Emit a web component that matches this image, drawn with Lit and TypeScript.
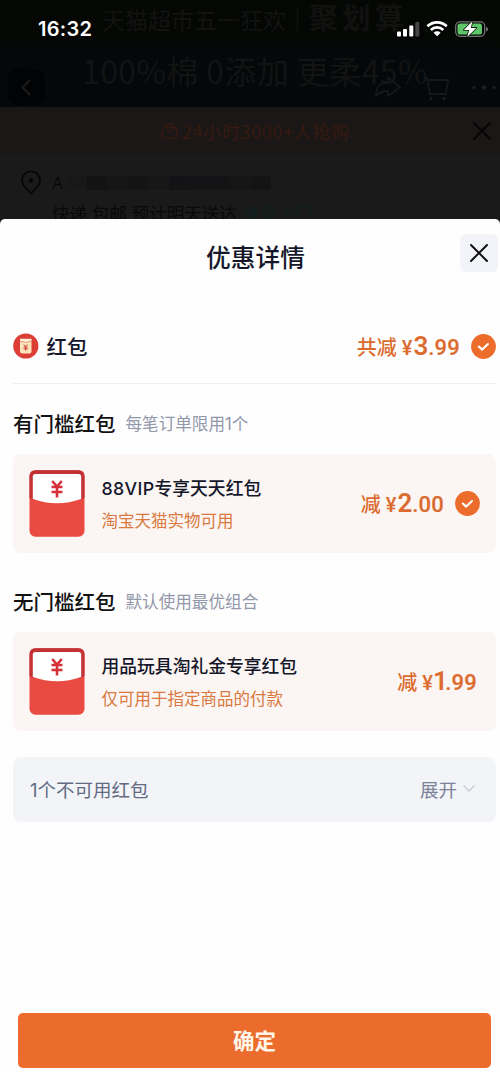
import { LitElement, html, css, svg, nothing } from "lit";
import { customElement, property } from "lit/decorators.js";

const CROSS = svg`<path d="M2 2 L18 18 M18 2 L2 18" fill="none" stroke="currentColor" stroke-width="2" stroke-linecap="round"/>`;

@customElement("status-bar")
class StatusBar extends LitElement {
  static styles = css`
    :host { display: flex; justify-content: space-between; align-items: center; height: 58px; padding: 0 11px 0 38px; box-sizing: border-box; color: #fff; }
    .time { font: 600 20px/24px Inter, sans-serif; letter-spacing: 0.3px; }
    .icons { display: block; }
  `;
  render() {
    return html`
      <span class="time">16:32</span>
      <svg class="icons" width="93" height="18" viewBox="0 0 93 18">
        <g fill="#fff">
          <rect x="1" y="11.500" width="4" height="5" rx="1"/>
          <rect x="7" y="9" width="4" height="7.500" rx="1"/>
          <rect x="13.300" y="5.500" width="4" height="11" rx="1"/>
          <rect x="19.300" y="2" width="4" height="14.500" rx="1" fill="#464646"/>
        </g>
        <g fill="none" stroke="#fff" stroke-width="2.700">
          <path d="M31.400 6.300 A14 14 0 0 1 50.800 6.300"/>
          <path d="M34.900 9.900 A9 9 0 0 1 47.300 9.900"/>
        </g>
        <path d="M37.600 12.700 A5 5 0 0 1 44.600 12.700 L41.100 16.300Z" fill="#fff"/>
        <rect x="59.700" y="1.800" width="29" height="14.600" rx="4.300" fill="none" stroke="#777" stroke-width="1.200"/>
        <rect x="61.500" y="3.600" width="24.500" height="11" rx="2.600" fill="#5fc56a"/>
        <path d="M90 6.800 Q92 7.400 92 9.200 Q92 11 90 11.600Z" fill="#777"/>
        <path d="M76.500 1 L67.800 10 L73.200 10 L71.200 17 L80.300 7.900 L74.800 7.900Z" fill="#fff" stroke="#0c1a0e" stroke-width="1.600" paint-order="stroke" stroke-linejoin="round"/>
      </svg>
    `;
  }
}

@customElement("dimmed-page")
class DimmedPage extends LitElement {
  static styles = css`
    :host { display: block; position: relative; height: 219px; overflow: hidden; background: #1b1a1a; font-family: Inter, "Noto Sans CJK SC", sans-serif; }
    .banner { height: 107px; box-sizing: border-box; background: linear-gradient(#040704 0, #040704 45px, #04080a 55px, #04080a 100%); color: #131312; white-space: nowrap; overflow: hidden; }
    .promo { display: flex; align-items: center; height: 38px; padding-left: 102px; font-size: 23px; }
    .sep { margin: 0 8px 0 8px; font-size: 20px; }
    .brand { font-size: 29px; line-height: 34px; font-weight: 700; letter-spacing: 4px; color: #111110; }
    .claim { height: 44px; line-height: 44px; margin-top: 10px; padding-left: 82px; font-family: "Noto Sans CJK SC", sans-serif; font-size: 32px; letter-spacing: 0.4px; }
    .status { position: absolute; top: 0; left: 0; right: 0; }
    .back { position: absolute; left: 8px; top: 69px; width: 37px; height: 36px; border-radius: 9px; background: #020304; }
    .tools { position: absolute; left: 370px; top: 68px; }
    .hot { display: flex; align-items: center; height: 47px; padding: 0 8px 0 161px; background: #1b1716; color: #361a11; font-size: 18px; }
    .hotText { margin-left: 4px; flex: 1; font-family: "Noto Sans CJK SC", sans-serif; letter-spacing: 0.65px; white-space: nowrap; }
    .cross { color: #050505; }
    .address { display: grid; grid-template-columns: 31px 1fr; padding: 14px 0 0 21px; color: #090909; }
    .pin { margin-top: 1px; }
    .blur { display: flex; align-items: center; height: 30px; }
    .a { font-size: 16px; width: 14px; }
    .block { height: 14px; width: 20.500px; }
    .ship { grid-column: 2; font-size: 17.500px; line-height: 26px; margin-top: 3px; white-space: nowrap; }
    .door { color: #0d201d; }
  `;
  render() {
    const tones = ["#181818", "#131314", "#161617", "#141415", "#171717", "#131315", "#141416", "#141416", "#161616", "#141414"];
    return html`
      <div class="banner">
        <div class="promo"><span>天猫超市五一狂欢</span><span class="sep">|</span><span class="brand">聚划算</span></div>
        <div class="claim">100%棉 0添加 更柔45%</div>
      </div>
      <div class="hot">
        <svg width="17" height="18" viewBox="0 0 17 18" fill="none" stroke="currentColor" stroke-width="1.500">
          <path d="M4.500 5.500 C4.500 0.500 12.500 0.500 12.500 5.500 M2.500 5.500 H14.500 L16 10 V13 Q16 16 13 16 H4 Q1 16 1 13 V10Z M5.500 8 Q8.500 11 11.500 8"/>
        </svg>
        <span class="hotText">24小时3000+人抢购</span>
        <svg class="cross" width="20" height="20" viewBox="0 0 20 20">${CROSS}</svg>
      </div>
      <div class="address">
        <svg class="pin" width="20" height="26" viewBox="0 0 20 26">
          <path d="M10 24.500 L3.800 17.800 A9 9 0 1 1 16.200 17.800Z" fill="none" stroke="#060606" stroke-width="1.800" stroke-linejoin="round"/>
          <circle cx="10" cy="11.500" r="2.300" fill="#060606"/>
        </svg>
        <div class="blur"><span class="a">A</span>${tones.map((tone) => html`<span class="block" style="background:${tone}"></span>`)}</div>
        <div class="ship">快递 包邮 预计明天送达 <span class="door">送货上门</span></div>
      </div>
      <svg class="back" viewBox="0 0 37 36"><path d="M22 11 L14.500 18.500 L22 26" fill="none" stroke="#1d1d1d" stroke-width="2"/></svg>
      <svg class="tools" width="130" height="36" viewBox="0 0 130 36" fill="none" stroke="#171717" stroke-width="1.800" stroke-linejoin="round">
        <path d="M6 28 C6 18 10 14.500 18 14.500 V9.500 L30 19 L18 28 V23 C12 23 9 24.500 6 28Z"/>
        <path d="M54 10 H57 L60 26 H76 L78 12 H58"/>
        <g fill="#1d1d1d" stroke="none">
          <circle cx="61" cy="30.500" r="1.600"/><circle cx="74" cy="30.500" r="1.600"/>
          <circle cx="104" cy="19.500" r="1.800"/><circle cx="114" cy="19.500" r="2.300"/><circle cx="124" cy="19.500" r="1.800"/>
        </g>
      </svg>
      <status-bar class="status"></status-bar>
    `;
  }
}

@customElement("price-cut")
class PriceCut extends LitElement {
  @property() label = "";
  @property() whole = "";
  @property() cents = "";
  @property({ type: Boolean }) checked = false;
  static styles = css`
    :host { display: flex; align-items: center; color: #dc6b2f; }
    .text { display: flex; align-items: baseline; line-height: 30px; padding-top: 1px; white-space: nowrap; font-family: Roboto, sans-serif; font-weight: 600; }
    .label { font-family: "Noto Sans CJK SC", sans-serif; font-size: 20px; font-weight: 500; margin-right: 5px; }
    .yen { font-size: 20px; margin-right: 1px; font-weight: 500; }
    .whole { font-size: 26px; }
    .narrow { margin: 0 -2.500px 0 -1px; }
    .cents { font-size: 22px; font-weight: 500; letter-spacing: 0.2px; -webkit-text-stroke: 0.2px currentColor; }
    .check { margin-left: 11px; }
  `;
  render() {
    return html`
      <span class="text"><span class="label">${this.label}</span><span class="yen">¥</span><span class="whole ${this.whole === "1" ? "narrow" : ""}">${this.whole}</span><span class="cents">${this.cents}</span></span>
      ${this.checked
        ? html`<svg class="check" width="25" height="25" viewBox="0 0 25 25"><circle cx="12.500" cy="12.500" r="12.400" fill="#ec6c2c"/><path d="M7.800 12.500 L11.200 15.600 L17 10" fill="none" stroke="#fff" stroke-width="2.100" stroke-linecap="round" stroke-linejoin="round"/></svg>`
        : nothing}
    `;
  }
}

@customElement("coupon-card")
class CouponCard extends LitElement {
  @property() name = "";
  @property() note = "";
  @property() whole = "";
  @property({ type: Boolean }) checked = false;
  static styles = css`
    :host { display: flex; align-items: center; height: 99px; box-sizing: border-box; padding: 0 16px; border-radius: 8px; background: #fbf5f3; font-family: Inter, "Noto Sans CJK SC", sans-serif; }
    .info { flex: 1; margin-left: 16.500px; padding-top: 2px; white-space: nowrap; }
    .name { font-size: 17.800px; line-height: 32px; font-weight: 500; color: #15172b; }
    .latin { letter-spacing: 0.35px; }
    .note { font-size: 16.500px; line-height: 32px; color: #d9793f; }
    .loose { margin-right: 3px; }
  `;
  render() {
    const [, latin, rest] = this.name.match(/^([0-9A-Z]*)(.*)$/)!;
    return html`
      <svg width="56" height="67" viewBox="0 0 56 67">
        <rect x="0.500" y="0.300" width="55" height="66.500" rx="6" fill="#e94b42"/>
        <path d="M0.500 28 V6.300 Q0.500 0.300 6.500 0.300 H49.500 Q55.500 0.300 55.500 6.300 V28 L51 30 H5Z" fill="#c23235"/>
        <path d="M3.800 6.500 Q3.800 4 6.500 4 H49.500 Q52.200 4 52.200 6.500 V29 Q28 37.500 3.800 29Z" fill="#fff"/>
        <path d="M23.200 11 L28 16.500 L32.800 11 M22.500 17 H33.500 M22.500 22 H33.500 M28 16.500 V27.500" fill="none" stroke="#d6313a" stroke-width="2.600"/>
      </svg>
      <div class="info"><div class="name"><span class="latin">${latin}</span>${rest}</div><div class="note">${this.note}</div></div>
      <price-cut class=${this.checked ? "" : "loose"} label="减" whole=${this.whole.split(".")[0]} cents=${"." + this.whole.split(".")[1]} ?checked=${this.checked}></price-cut>
    `;
  }
}

@customElement("app-root")
class AppRoot extends LitElement {
  static styles = css`
    :host { display: flex; flex-direction: column; height: 1072px; overflow: hidden; background: #1b1a1a; font-family: Inter, "Noto Sans CJK SC", sans-serif; }
    .sheet { flex: 1; display: flex; flex-direction: column; background: #fefefe; border-radius: 5px 5px 0 0; padding: 0 4px 4px 13px; }
    .top { display: grid; grid-template-columns: 38px 1fr 38px; align-items: start; height: 38px; margin: 15px -2px 0 -13px; }
    .title { grid-column: 2; text-align: center; font-size: 24.700px; line-height: 38px; font-weight: 500; color: #15172b; padding: 5px 0 0 13px; }
    .close { display: grid; place-items: center; width: 38px; height: 38px; padding: 0; border: 0; border-radius: 6px; background: #f2f4f9; color: #111; }
    .summary { display: flex; align-items: center; height: 74px; margin-top: 37px; border-bottom: 1.500px solid #efeff2; }
    .kind { flex: 1; margin-left: 7.500px; font-size: 20.500px; font-weight: 500; color: #15172b; }
    .heading { display: flex; align-items: center; gap: 10px; height: 30px; white-space: nowrap; }
    .first { margin-top: 24px; }
    .second { margin-top: 33px; }
    .group { font-size: 20.500px; font-weight: 500; color: #121212; }
    .hint { font-size: 16.600px; color: #9297aa; }
    .card { margin-top: 16px; }
    .unusable { display: flex; align-items: center; justify-content: space-between; height: 65px; box-sizing: border-box; margin-top: 26px; padding: 0 20px 2px 17px; border-radius: 8px; background: #f2f4f8; color: #626a82; font-size: 18.500px; }
    .expand { display: flex; align-items: center; gap: 5px; color: #7b8299; }
    .ok { height: 55px; margin: auto 5px 0; border: 0; border-radius: 5px; background: #ec6c2d; color: #fff5e8; font: 700 21.500px/53px "Noto Sans CJK SC", sans-serif; padding: 0 0 2px; }
  `;
  render() {
    return html`
      <dimmed-page></dimmed-page>
      <div class="sheet">
        <div class="top">
          <div class="title">优惠详情</div>
          <button class="close"><svg width="20" height="20" viewBox="0 0 20 20">${CROSS}</svg></button>
        </div>
        <div class="summary">
          <svg width="26" height="26" viewBox="0 0 26 26">
            <circle cx="12.800" cy="13" r="12.600" fill="#dc3e36"/>
            <path d="M7 8.500 H18.500 V18.500 Q18.500 20.500 16.500 20.500 H9 Q7 20.500 7 18.500Z" fill="#fce3bb"/>
            <path d="M7 5.800 H18.500 V8.300 Q12.700 10.500 7 8.300Z" fill="#fff0d5"/>
            <path d="M7 8.300 Q12.700 10.500 18.500 8.300" fill="none" stroke="#dc7d60" stroke-width="0.700"/>
            <path d="M10.800 11.500 L12.700 13.700 L14.600 11.500 M10.600 14 H14.800 M10.600 15.800 H14.800 M12.700 13.700 V17.600" fill="none" stroke="#d3423a" stroke-width="1"/>
          </svg>
          <span class="kind">红包</span>
          <price-cut label="共减" whole="3" cents=".99" checked></price-cut>
        </div>
        <div class="heading first"><span class="group">有门槛红包</span><span class="hint">每笔订单限用1个</span></div>
        <coupon-card class="card" name="88VIP专享天天红包" note="淘宝天猫实物可用" whole="2.00" checked></coupon-card>
        <div class="heading second"><span class="group">无门槛红包</span><span class="hint">默认使用最优组合</span></div>
        <coupon-card class="card" name="用品玩具淘礼金专享红包" note="仅可用于指定商品的付款" whole="1.99"></coupon-card>
        <div class="unusable">
          <span>1个不可用红包</span>
          <span class="expand">展开<svg width="14" height="9" viewBox="0 0 14 9"><path d="M1.500 1.500 L7 7 L12.500 1.500" fill="none" stroke="#c6cad5" stroke-width="1.300"/></svg></span>
        </div>
        <button class="ok">确定</button>
      </div>
    `;
  }
}
